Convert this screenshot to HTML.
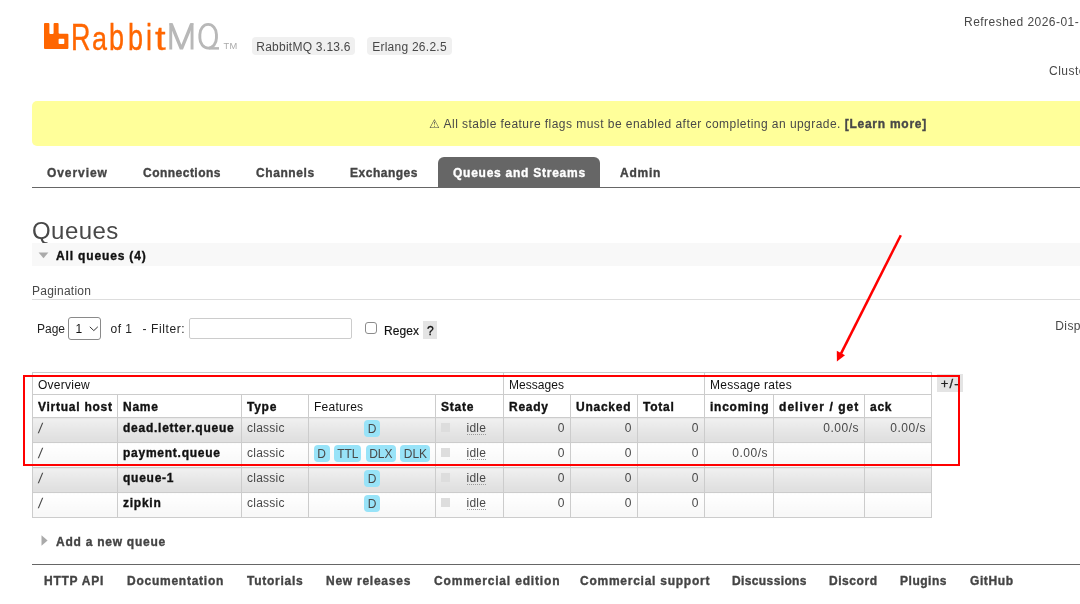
<!DOCTYPE html>
<html><head><meta charset="utf-8">
<style>
html,body{margin:0;padding:0;background:#fff;}
body{width:1080px;height:604px;overflow:hidden;position:relative;font-family:"Liberation Sans",sans-serif;font-size:12px;color:#484848;letter-spacing:0.25px;}
.a{position:absolute;white-space:nowrap;line-height:14px;}
b,.b{font-weight:bold;letter-spacing:0.75px;-webkit-text-stroke:0.35px currentColor;}
.lg{top:15.2px;font-size:37.5px;line-height:44px;color:#f60;letter-spacing:0;transform-origin:0 0;-webkit-text-stroke:0.4px #f60;}
.badge{background:#f0f0f0;border-radius:4px;height:18px;line-height:20px;padding:0;text-align:center;}
#banner{left:32px;top:101px;width:1060px;height:45.4px;background:#ffff9a;border-radius:5px 0 0 5px;}
#menuline{left:32px;top:187px;width:1060px;height:1px;background:#666;}
.tab{color:#444;font-weight:bold;letter-spacing:0.75px;-webkit-text-stroke:0.35px currentColor;top:166px;}
#sel{left:438px;top:157px;width:162px;height:30px;background:#666;border-radius:6px 6px 0 0;}
h1{margin:0;font-weight:normal;}
table{position:absolute;left:32px;top:372px;border-collapse:collapse;table-layout:fixed;}
td,th{border:1px solid #ccc;padding:0;text-align:left;font-weight:normal;vertical-align:top;overflow:hidden;white-space:nowrap;}
tr{height:25px;}tr.h{height:22px;}tr.h2{height:23px;}
tr.g td{background:linear-gradient(#f0f0f0 0%,#e0e0e0 85%);}
tr.w td{background:linear-gradient(#ffffff 0%,#f8f8f8 85%);}
td .t{display:block;padding:2.8px 0 0 5px;line-height:14px;}tr.h .t{padding-top:4.7px;}tr.h2 .t{padding-top:5px;}
td.r .t{text-align:right;padding:2.8px 5px 0 0;letter-spacing:0.5px;}
td.c{text-align:center;}
.f{display:inline-block;background:#98e3f8;border-radius:4px;height:17px;line-height:18.6px;margin-top:1.6px;overflow:hidden;vertical-align:top;padding:0;width:16.3px;text-align:center;letter-spacing:0;font-size:12px;}.f+.f{margin-left:4.5px;}.f3{width:27px;}.f4{width:30.1px;}
.sl{display:inline-block;transform-origin:0 70%;transform:translateY(1px) scale(1.25,1.18) skewX(-7deg);}
.sq{position:absolute;width:9px;height:9px;background:#ddd;}
.idle{display:inline-block;line-height:12px;border-bottom:1px dotted #999;}
</style></head><body><div id="wrap" style="position:absolute;left:0;top:0;width:1080px;height:604px;overflow:hidden;will-change:transform;">

<!-- logo -->
<svg class="a" style="left:43.5px;top:23.07px" width="26" height="28" viewBox="0 0 26 28">
<path fill="#f60" fill-rule="evenodd" d="M0,1 a1,1 0 0 1 1,-1 h3.4 a1,1 0 0 1 1,1 v9 a1,1 0 0 0 1,1 h2.2 a1,1 0 0 0 1,-1 v-9 a1,1 0 0 1 1,-1 h3 a1,1 0 0 1 1,1 v8.7 a1,1 0 0 0 1,1 h7.8 a1,1 0 0 1 1,1 v13.3 a1,1 0 0 1 -1,1 h-22.4 a1,1 0 0 1 -1,-1 z M15.4,15.8 h4.1 a0.8,0.8 0 0 1 0.8,0.8 v3.6 a0.8,0.8 0 0 1 -0.8,0.8 h-4.1 a0.8,0.8 0 0 1 -0.8,-0.8 v-3.6 a0.8,0.8 0 0 1 0.8,-0.8 z"/>
</svg>
<div class="a lg" id="L0" style="left:71.4px;transform:scaleX(0.72);">R</div><div class="a lg" id="L1" style="left:91.5px;transform-origin:0 34.9px;transform:scale(0.72,0.87);">a</div><div class="a lg" id="L2" style="left:109.4px;transform:scaleX(0.72);">b</div><div class="a lg" id="L3" style="left:127.8px;transform:scaleX(0.72);">b</div><div class="a lg" id="L4" style="left:146.2px;transform:scaleX(0.72);">i</div><div class="a lg" id="L5" style="left:154.6px;transform-origin:0 34.9px;transform:scale(1.02,0.9);">t</div>
<svg class="a" id="lg2" style="left:160px;top:15px" width="70" height="45" viewBox="160 15 70 45"><path d="M170.75,49.5 V23.3 M192.05,49.5 V23.3" stroke="#b8b8b8" stroke-width="2.9" fill="none"/><path d="M169.4,23.3 h3.3 l8.7,21.5 l8.7,-21.5 h3.3 v1 l-10.4,25.2 h-3.2 l-10.4,-25.2 z" fill="#b8b8b8"/><rect x="199.85" y="24.4" width="16.6" height="23.7" rx="8.3" ry="10" stroke="#b8b8b8" stroke-width="2.9" fill="none"/><rect x="208.8" y="47.1" width="10.2" height="2.5" fill="#b8b8b8"/></svg>
<div class="a" style="left:223.4px;top:41.6px;font-size:9.3px;line-height:9px;color:#aaa;letter-spacing:0.5px;">TM</div>

<div class="a badge" style="left:252px;top:37px;width:103px;">RabbitMQ 3.13.6</div>
<div class="a badge" style="left:367px;top:37px;width:85px;">Erlang 26.2.5</div>

<div class="a" style="left:964px;top:14.5px;letter-spacing:0.47px;">Refreshed 2026-01-14</div>
<div class="a" style="left:1049px;top:63.5px;letter-spacing:0.5px;">Cluster rabbit</div>

<div class="a" id="banner"></div>
<div class="a" style="left:429px;top:117px;letter-spacing:0.45px;">⚠ All stable feature flags must be enabled after completing an upgrade. <b>[Learn more]</b></div>

<div class="a" id="sel"></div>
<div class="a tab" style="left:47px;letter-spacing:0.92px;">Overview</div>
<div class="a tab" style="left:143px;letter-spacing:0.48px;">Connections</div>
<div class="a tab" style="left:256px;letter-spacing:0.58px;">Channels</div>
<div class="a tab" style="left:350px;letter-spacing:0.51px;">Exchanges</div>
<div class="a tab" style="left:453px;color:#fff;">Queues and Streams</div>
<div class="a tab" style="left:620px;">Admin</div>
<div class="a" id="menuline"></div>

<div class="a" style="left:32px;top:216px;font-size:24px;line-height:30px;letter-spacing:0.45px;color:#484848;">Queues</div>
<div class="a" style="left:32px;top:243px;width:1060px;height:23px;background:#f8f8f8;"></div>
<svg class="a" style="left:0;top:0;pointer-events:none" width="200" height="604"><path d="M38.6,252.4 L48.4,252.4 L43.5,258.2 Z" fill="#aaa"/><path d="M41.5,535.3 L47.6,540.5 L41.5,545.8 Z" fill="#aaa"/></svg>
<div class="a b" style="left:56px;top:248.7px;color:#111;letter-spacing:0.85px;">All queues (4)</div>

<div class="a" style="left:32px;top:284px;">Pagination</div>
<div class="a" style="left:32px;top:299px;width:1060px;height:1px;background:#ddd;"></div>

<div class="a" style="left:37px;top:322px;letter-spacing:0;color:#222;">Page</div>
<div class="a" style="left:68px;top:317px;width:31px;height:21px;border:1px solid #8a8a8a;border-radius:3px;"></div>
<div class="a" style="left:75.5px;top:322px;color:#111;">1</div>
<svg class="a" style="left:88.6px;top:325.8px" width="11" height="7"><path d="M0.8,0.8 L4.8,4.6 L8.8,0.8" stroke="#333" stroke-width="1" fill="none"/></svg>
<div class="a" style="left:110.5px;top:322px;letter-spacing:0.5px;color:#222;">of 1</div><div class="a" style="left:142.5px;top:322px;letter-spacing:0.6px;color:#222;">- Filter:</div>
<div class="a" style="left:189px;top:318px;width:161px;height:19px;border:1px solid #ccc;border-radius:2px;"></div>
<div class="a" style="left:365px;top:322.1px;width:9.6px;height:10.2px;border:1.3px solid #8c8c8c;border-radius:3px;"></div>
<div class="a" style="left:384px;top:324.2px;letter-spacing:0.1px;color:#111;-webkit-text-stroke:0.15px #111;">Regex</div>
<div class="a" style="left:423px;top:321.3px;width:13.5px;height:17.4px;background:#e4e4e4;"></div>
<div class="a" style="left:427px;top:324.3px;color:#111;-webkit-text-stroke:0.3px #111;">?</div>
<div class="a" style="left:1055.3px;top:319.3px;letter-spacing:0.4px;">Displaying</div>

<table>
<colgroup><col style="width:85px"><col style="width:124px"><col style="width:67px"><col style="width:127px"><col style="width:68px"><col style="width:67px"><col style="width:67px"><col style="width:67px"><col style="width:69px"><col style="width:91px"><col style="width:67px"></colgroup>
<tr class="h"><td colspan="5"><span class="t" style="color:#111">Overview</span></td><td colspan="3"><span class="t" style="color:#111;letter-spacing:0.05px">Messages</span></td><td colspan="3"><span class="t" style="color:#111">Message rates</span></td></tr>
<tr class="h2"><td><span class="t b" style="color:#111">Virtual host</span></td><td><span class="t b" style="color:#111">Name</span></td><td><span class="t b" style="color:#111">Type</span></td><td><span class="t" style="color:#111">Features</span></td><td><span class="t b" style="color:#111">State</span></td><td><span class="t b" style="color:#111">Ready</span></td><td><span class="t b" style="color:#111">Unacked</span></td><td><span class="t b" style="color:#111">Total</span></td><td><span class="t b" style="color:#111">incoming</span></td><td><span class="t b" style="color:#111;letter-spacing:1.05px">deliver / get</span></td><td><span class="t b" style="color:#111">ack</span></td></tr>
<tr class="g"><td><span class="t"><span class="sl">/</span></span></td><td><span class="t b" style="color:#111">dead.letter.queue</span></td><td><span class="t">classic</span></td><td class="c"><span class="f">D</span></td><td><span class="t" style="padding-left:30.5px"><span class="idle">idle</span></span></td><td class="r"><span class="t">0</span></td><td class="r"><span class="t">0</span></td><td class="r"><span class="t">0</span></td><td></td><td class="r"><span class="t">0.00/s</span></td><td class="r"><span class="t">0.00/s</span></td></tr>
<tr class="w"><td><span class="t"><span class="sl">/</span></span></td><td><span class="t b" style="color:#111">payment.queue</span></td><td><span class="t">classic</span></td><td class="c"><span class="f">D</span><span class="f f3">TTL</span><span class="f f4">DLX</span><span class="f f4">DLK</span></td><td><span class="t" style="padding-left:30.5px"><span class="idle">idle</span></span></td><td class="r"><span class="t">0</span></td><td class="r"><span class="t">0</span></td><td class="r"><span class="t">0</span></td><td class="r"><span class="t">0.00/s</span></td><td></td><td></td></tr>
<tr class="g"><td><span class="t"><span class="sl">/</span></span></td><td><span class="t b" style="color:#111">queue-1</span></td><td><span class="t">classic</span></td><td class="c"><span class="f">D</span></td><td><span class="t" style="padding-left:30.5px"><span class="idle">idle</span></span></td><td class="r"><span class="t">0</span></td><td class="r"><span class="t">0</span></td><td class="r"><span class="t">0</span></td><td></td><td></td><td></td></tr>
<tr class="w"><td><span class="t"><span class="sl">/</span></span></td><td><span class="t b" style="color:#111">zipkin</span></td><td><span class="t">classic</span></td><td class="c"><span class="f">D</span></td><td><span class="t" style="padding-left:30.5px"><span class="idle">idle</span></span></td><td class="r"><span class="t">0</span></td><td class="r"><span class="t">0</span></td><td class="r"><span class="t">0</span></td><td></td><td></td><td></td></tr>
</table>
<div class="sq" style="left:441px;top:423px"></div>
<div class="sq" style="left:441px;top:448px"></div>
<div class="sq" style="left:441px;top:473px"></div>
<div class="sq" style="left:441px;top:498px"></div>

<div class="a" style="left:936.8px;top:374.4px;width:26.5px;height:17.2px;background:#e4e4e4;"></div>
<div class="a" style="left:940.8px;top:377px;color:#222;letter-spacing:1.1px;font-size:13px;-webkit-text-stroke:0.3px #222;">+/-</div>

<!-- annotations -->
<div class="a" style="left:23px;top:375px;width:933px;height:87px;border:2px solid #f00;"></div>
<svg class="a" style="left:0;top:0" width="1080" height="604"><line x1="900.8" y1="235.2" x2="841" y2="353.6" stroke="#f00" stroke-width="2.5"/><path d="M836.9,361.5 L836.8,350.8 L845,355.2 Z" fill="#f00"/></svg>


<div class="a b" style="left:56px;top:535px;color:#444;">Add a new queue</div>

<div class="a" style="left:32px;top:564px;width:1060px;height:1px;background:#666;"></div>
<div class="a tab" style="left:44px;top:574px;">HTTP API</div>
<div class="a tab" style="left:127px;top:574px;">Documentation</div>
<div class="a tab" style="left:247px;top:574px;">Tutorials</div>
<div class="a tab" style="left:326px;top:574px;">New releases</div>
<div class="a tab" style="left:434px;top:574px;letter-spacing:0.83px;">Commercial edition</div>
<div class="a tab" style="left:580px;top:574px;">Commercial support</div>
<div class="a tab" style="left:732px;top:574px;letter-spacing:0.38px;">Discussions</div>
<div class="a tab" style="left:829px;top:574px;letter-spacing:0.55px;">Discord</div>
<div class="a tab" style="left:900px;top:574px;letter-spacing:0.52px;">Plugins</div>
<div class="a tab" style="left:970px;top:574px;letter-spacing:0.60px;">GitHub</div>
</div></body></html>
